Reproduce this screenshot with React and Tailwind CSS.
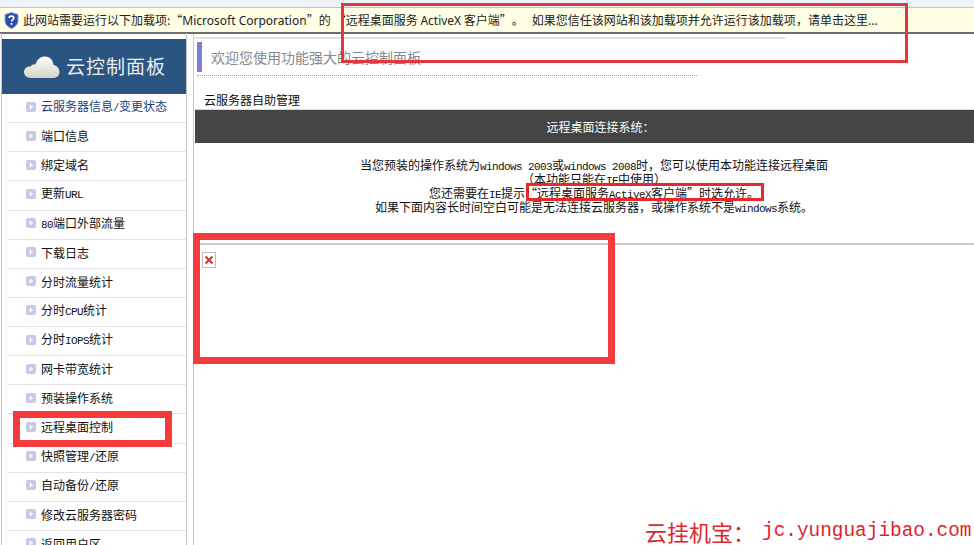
const items = [
  "云服务器信息/变更状态","端口信息","绑定域名","更新URL","80端口外部流量","下载日志","分时流量统计","分时CPU统计","分时IOPS统计","网卡带宽统计","预装操作系统","远程桌面控制","快照管理/还原","自动备份/还原","修改云服务器密码","返回用户区",
];

function Bullet() {
  return (
    <svg width="10" height="10" viewBox="0 0 10 10" className="block shrink-0">
      <rect x="0" y="0" width="10" height="10" rx="2" fill="#c8c8e6" />
      <path d="M3.5 2.2 L7.5 5 L3.5 7.8 Z" fill="#f4f4fb" />
    </svg>
  );
}

function Shield() {
  return (
    <svg width="15" height="17" viewBox="0 0 15 17" className="shrink-0">
      <path d="M7.5 0.5 L14 2.5 V8.5 C14 12.5 11 15 7.5 16.5 C4 15 1 12.5 1 8.5 V2.5 Z" fill="#2b4fa8" stroke="#8fa0c8" strokeWidth="1" />
      <path d="M5.2 6 C5.2 3.6 9.8 3.6 9.8 6 C9.8 7.8 7.5 7.6 7.5 9.6" fill="none" stroke="#ffffff" strokeWidth="1.7" />
      <rect x="6.6" y="11" width="1.8" height="1.8" fill="#ffffff" />
    </svg>
  );
}

function Cloud() {
  return (
    <svg width="36" height="24" viewBox="0 0 36 24" className="shrink-0">
      <defs>
        <linearGradient id="cloudFill" x1="0" y1="0" x2="0" y2="1">
          <stop offset="0" stopColor="#ffffff" />
          <stop offset="1" stopColor="#d6d2c8" />
        </linearGradient>
      </defs>
      <path d="M7 23 C2.5 23 0 20 0 17 C0 13.5 3 11 6.5 11.5 C8 9.5 10 9 11.5 9.5 C13 4 17 1.5 21 1.5 C26 1.5 29 5 29.5 10 C33 10.5 35.5 13.5 35.5 17 C35.5 20.5 33 23 29 23 Z" fill="url(#cloudFill)" />
    </svg>
  );
}

const mono = "[font-family:'Liberation_Mono',monospace] text-[11px] tracking-[-0.6px]";
const cjk = "[font-family:'Noto_Sans_CJK_SC','Liberation_Sans',sans-serif]";
const latin = "[font-family:'Noto_Sans',sans-serif]";

function Mixed({ text }) {
  return text.split(/([A-Za-z0-9/ ]+)/).map((part, i) =>
    /^[A-Za-z0-9/ ]+$/.test(part) ? <span key={i} className={`${mono} whitespace-pre`}>{part}</span> : <span key={i}>{part}</span>
  );
}

export default function App() {
  return (
    <div className={`relative h-[545px] w-[974px] overflow-hidden bg-white text-[12px] text-[#111] ${cjk}`}>
      <div className="h-2 border-b border-[#b8c4d4] bg-[#eef3fa]" />
      <div className="flex h-[24px] items-center gap-[4px] bg-[#ffffe6] pl-[4px] text-[12px] leading-none text-[#222]">
        <Shield />
        <span className="whitespace-nowrap">此网站需要运行以下加载项:“<span className={latin}>Microsoft Corporation</span>”的<span className="ml-[3px]">“远程桌面服务 </span><span className={latin}>ActiveX</span> 客户端”<span className="ml-[6px]">。</span><span className="ml-[8px]">如果您信任该网站和该加载项并允许运行该加载项</span>{"\uFF0C"}请单击这里...</span>
      </div>
      <div className="h-[2px] bg-[#6e6e6e]" />
      <div className="flex h-[511px]">
        <aside className="ml-[1px] mt-[-1px] h-[calc(100%+1px)] w-[186px] shrink-0 border-x border-[#c4c4c4] pt-[6px]">
          <div className="flex h-[55px] items-center gap-[6px] bg-[#2a5580] pl-[22px] text-[19px] tracking-[1px] text-[#e8edf2]">
            <Cloud />
            <span>云控制面板</span>
          </div>
          <ul className="ml-[5px]">
            {items.map((t, i) => (
              <li key={t} className="flex h-[29.14px] items-center gap-[5px] border-b border-[#e4e4e8] pb-[2px] pl-[19px] leading-none">
                <span className="mt-[-1px]"><Bullet /></span>
                <span className={i === 0 ? "text-[#1c3f7c]" : ""}><Mixed text={t} /></span>
              </li>
            ))}
          </ul>
        </aside>
        <main className="ml-[6px] min-w-0 flex-1 border-l border-[#c8c8c8]">
          <div className="mt-[3px] h-[2px] w-[592px] bg-[#e2e2e2]" />
          <div className="ml-[3px] mr-[277px] mt-[3px] h-[34px] border-b border-dotted border-[#999]">
            <div className="flex h-[30px] items-center border-l-[5px] border-[#7f7fd0] pl-[9px] text-[14px] text-[#888]">欢迎您使用功能强大的云控制面板</div>
          </div>
          <div className="ml-[10px] mt-[15px] h-[18px] leading-[17px]">云服务器自助管理</div>
          <div className="ml-[1px] h-[34px] border-t border-[#d8d8d8] bg-[#444444] pl-[32px] text-center leading-[33px] text-white">远程桌面连接系统{"\uFF1A"}</div>
          <div className="mt-[15px] h-[87px] border-b-2 border-[#c8c8c8] pl-[20px] text-center text-[12px] leading-[14px]">
            <p className="h-[14px]"><Mixed text={"当您预装的操作系统为windows 2003或windows 2008时\uFF0C您可以使用本功能连接远程桌面"} /></p>
            <p className="h-[14px]"><Mixed text={"\uFF08本功能只能在IE中使用\uFF09"} /></p>
            <p className="h-[14px]"><Mixed text={"您还需要在IE提示\u201C远程桌面服务ActiveX客户端\u201D时选允许。"} /></p>
            <p className="h-[14px]"><Mixed text={"如果下面内容长时间空白可能是无法连接云服务器\uFF0C或操作系统不是windows系统。"} /></p>
          </div>
          <div className="ml-[8px] mt-[7px] flex h-[16px] w-[14px] items-center justify-center border border-[#bdbdbd] bg-white">
            <svg width="10" height="10" viewBox="0 0 10 10"><path d="M1.5 1.5 L8.5 8.5 M8.5 1.5 L1.5 8.5" stroke="#d23a2e" strokeWidth="2.2" /></svg>
          </div>
        </main>
      </div>

      <div className="absolute left-[341px] top-[3px] h-[60px] w-[567px] border-[3px] border-[#e0383e]" />
      <div className="absolute left-[526px] top-[183px] h-[18px] w-[238px] border-[3px] border-[#e8282c]" />
      <div className="absolute left-[193px] top-[233px] h-[131px] w-[422px] border-[7px] border-[#f43a3a]" />
      <div className="absolute left-[13px] top-[411px] h-[36px] w-[159px] border-[7px] border-[#f43a3a]" />
      <div className="absolute left-[645px] top-[519px] flex h-[25px] items-center whitespace-nowrap text-[22px] leading-[25px] text-[#e0242c]">
        <span>云挂机宝{"\uFF1A"}</span><span className="ml-[7px] [font-family:'Liberation_Mono',monospace] text-[19.4px]">jc.yunguajibao.com</span>
      </div>
    </div>
  );
}
